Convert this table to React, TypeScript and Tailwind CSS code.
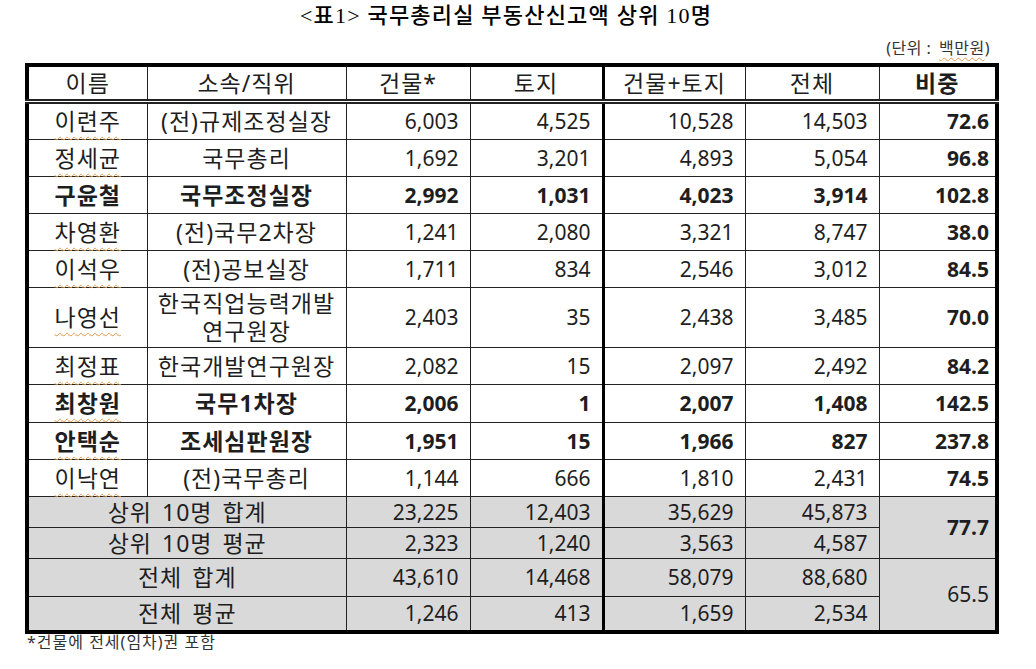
import React from "react";

type Row = {
  name: string;
  pos: string[];
  b: string;
  l: string;
  bl: string;
  t: string;
  r: string;
  bold?: boolean;
  mark?: boolean;
  tall?: boolean;
};

const rows: Row[] = [
  { name: "이련주", pos: ["(전)규제조정실장"], b: "6,003", l: "4,525", bl: "10,528", t: "14,503", r: "72.6", mark: true },
  { name: "정세균", pos: ["국무총리"], b: "1,692", l: "3,201", bl: "4,893", t: "5,054", r: "96.8", mark: true },
  { name: "구윤철", pos: ["국무조정실장"], b: "2,992", l: "1,031", bl: "4,023", t: "3,914", r: "102.8", bold: true },
  { name: "차영환", pos: ["(전)국무2차장"], b: "1,241", l: "2,080", bl: "3,321", t: "8,747", r: "38.0", mark: true },
  { name: "이석우", pos: ["(전)공보실장"], b: "1,711", l: "834", bl: "2,546", t: "3,012", r: "84.5", mark: true },
  { name: "나영선", pos: ["한국직업능력개발", "연구원장"], b: "2,403", l: "35", bl: "2,438", t: "3,485", r: "70.0", mark: true, tall: true },
  { name: "최정표", pos: ["한국개발연구원장"], b: "2,082", l: "15", bl: "2,097", t: "2,492", r: "84.2", mark: true },
  { name: "최창원", pos: ["국무1차장"], b: "2,006", l: "1", bl: "2,007", t: "1,408", r: "142.5", bold: true, mark: true },
  { name: "안택순", pos: ["조세심판원장"], b: "1,951", l: "15", bl: "1,966", t: "827", r: "237.8", bold: true, mark: true },
  { name: "이낙연", pos: ["(전)국무총리"], b: "1,144", l: "666", bl: "1,810", t: "2,431", r: "74.5", mark: true },
];

const heights = ["h-[38px]", "h-[37px]", "h-[37px]", "h-[37px]", "h-[37px]", "h-[60px]", "h-[37px]", "h-[38px]", "h-[37px]", "h-[37px]"];

const cell = "border border-[#222] p-0 align-middle";
const ko = "text-[23px] tracking-[1px]";
const num = `${cell} text-right pr-[11px]`;
const thick = "border-r-[3px] border-r-black";
const mark = "underline decoration-wavy decoration-[#e29a4a] decoration-1 underline-offset-[6px]";

export default function App() {
  return (
    <div className="w-[1036px] h-[669px] bg-white overflow-hidden text-[#1e1e1e] font-['Noto_Sans','Noto_Sans_CJK_KR',sans-serif]">
      <div className="w-[970px] ml-[25px]">
        <div className="h-[32px] pt-[1px] pr-[8px] text-center text-[22px] tracking-[1.2px] font-medium leading-[30px] font-['Liberation_Serif','Noto_Sans_CJK_KR',serif] text-black">
          &lt;표1&gt; 국무총리실 부동산신고액 상위 10명
        </div>
        <div className="h-[31px] flex items-center justify-end pr-[5px] text-[16px] tracking-[0.5px] leading-none text-[#333]">
          (단위&nbsp;:&nbsp;<span className="ml-[3px] underline decoration-wavy decoration-[#e29a4a] decoration-1 underline-offset-[3px]">백만원</span>)
        </div>
        <table className="w-[970px] table-fixed border-collapse border-[4px] border-black text-[21px] leading-[26px]">
          <colgroup>
            <col className="w-[120px]" />
            <col className="w-[199px]" />
            <col className="w-[124px]" />
            <col className="w-[133px]" />
            <col className="w-[142px]" />
            <col className="w-[134px]" />
            <col className="w-[118px]" />
          </colgroup>
          <thead>
            <tr className="h-[36px] border-b-[5px] border-double border-b-[#222]">
              <th className={`${cell} ${ko} font-normal`}>이름</th>
              <th className={`${cell} ${ko} font-normal`}>소속/직위</th>
              <th className={`${cell} ${ko} font-normal`}>건물*</th>
              <th className={`${cell} ${ko} font-normal ${thick}`}>토지</th>
              <th className={`${cell} ${ko} font-normal`}>건물+토지</th>
              <th className={`${cell} ${ko} font-normal`}>전체</th>
              <th className={`${cell} ${ko} font-bold`}>비중</th>
            </tr>
          </thead>
          <tbody>
            {rows.map((r, i) => (
              <tr key={r.name} className={`${heights[i]} ${r.bold ? "font-bold" : ""}`}>
                <td className={`${cell} ${ko} text-center`}>
                  <span className={r.mark ? mark : ""}>{r.name}</span>
                </td>
                <td className={`${cell} ${ko} text-center ${r.tall ? "leading-[28px]" : ""}`}>
                  {r.pos.map((p) => (
                    <div key={p}>{p}</div>
                  ))}
                </td>
                <td className={num}>{r.b}</td>
                <td className={`${num} ${thick}`}>{r.l}</td>
                <td className={num}>{r.bl}</td>
                <td className={num}>{r.t}</td>
                <td className={`${cell} text-right pr-[6px] font-bold`}>{r.r}</td>
              </tr>
            ))}
            <tr className="h-[31px] bg-[#d9d9d9]">
              <td colSpan={2} className={`${cell} ${ko} text-center [word-spacing:3px]`}>상위 10명 합계</td>
              <td className={num}>23,225</td>
              <td className={`${num} ${thick}`}>12,403</td>
              <td className={num}>35,629</td>
              <td className={num}>45,873</td>
              <td rowSpan={2} className={`${cell} text-right pr-[6px] font-bold`}>77.7</td>
            </tr>
            <tr className="h-[31px] bg-[#d9d9d9]">
              <td colSpan={2} className={`${cell} ${ko} text-center [word-spacing:3px]`}>상위 10명 평균</td>
              <td className={num}>2,323</td>
              <td className={`${num} ${thick}`}>1,240</td>
              <td className={num}>3,563</td>
              <td className={num}>4,587</td>
            </tr>
            <tr className="h-[38px] bg-[#d9d9d9]">
              <td colSpan={2} className={`${cell} ${ko} text-center [word-spacing:3px]`}>전체 합계</td>
              <td className={num}>43,610</td>
              <td className={`${num} ${thick}`}>14,468</td>
              <td className={num}>58,079</td>
              <td className={num}>88,680</td>
              <td rowSpan={2} className={`${cell} text-right pr-[6px]`}>65.5</td>
            </tr>
            <tr className="h-[36px] bg-[#d9d9d9]">
              <td colSpan={2} className={`${cell} ${ko} text-center [word-spacing:3px]`}>전체 평균</td>
              <td className={num}>1,246</td>
              <td className={`${num} ${thick}`}>413</td>
              <td className={num}>1,659</td>
              <td className={num}>2,534</td>
            </tr>
          </tbody>
        </table>
        <div className="-mt-[1px] pl-[2px] text-[16px] leading-[18px] tracking-[1px] text-[#333]">*건물에 전세(임차)권 포함</div>
      </div>
    </div>
  );
}
